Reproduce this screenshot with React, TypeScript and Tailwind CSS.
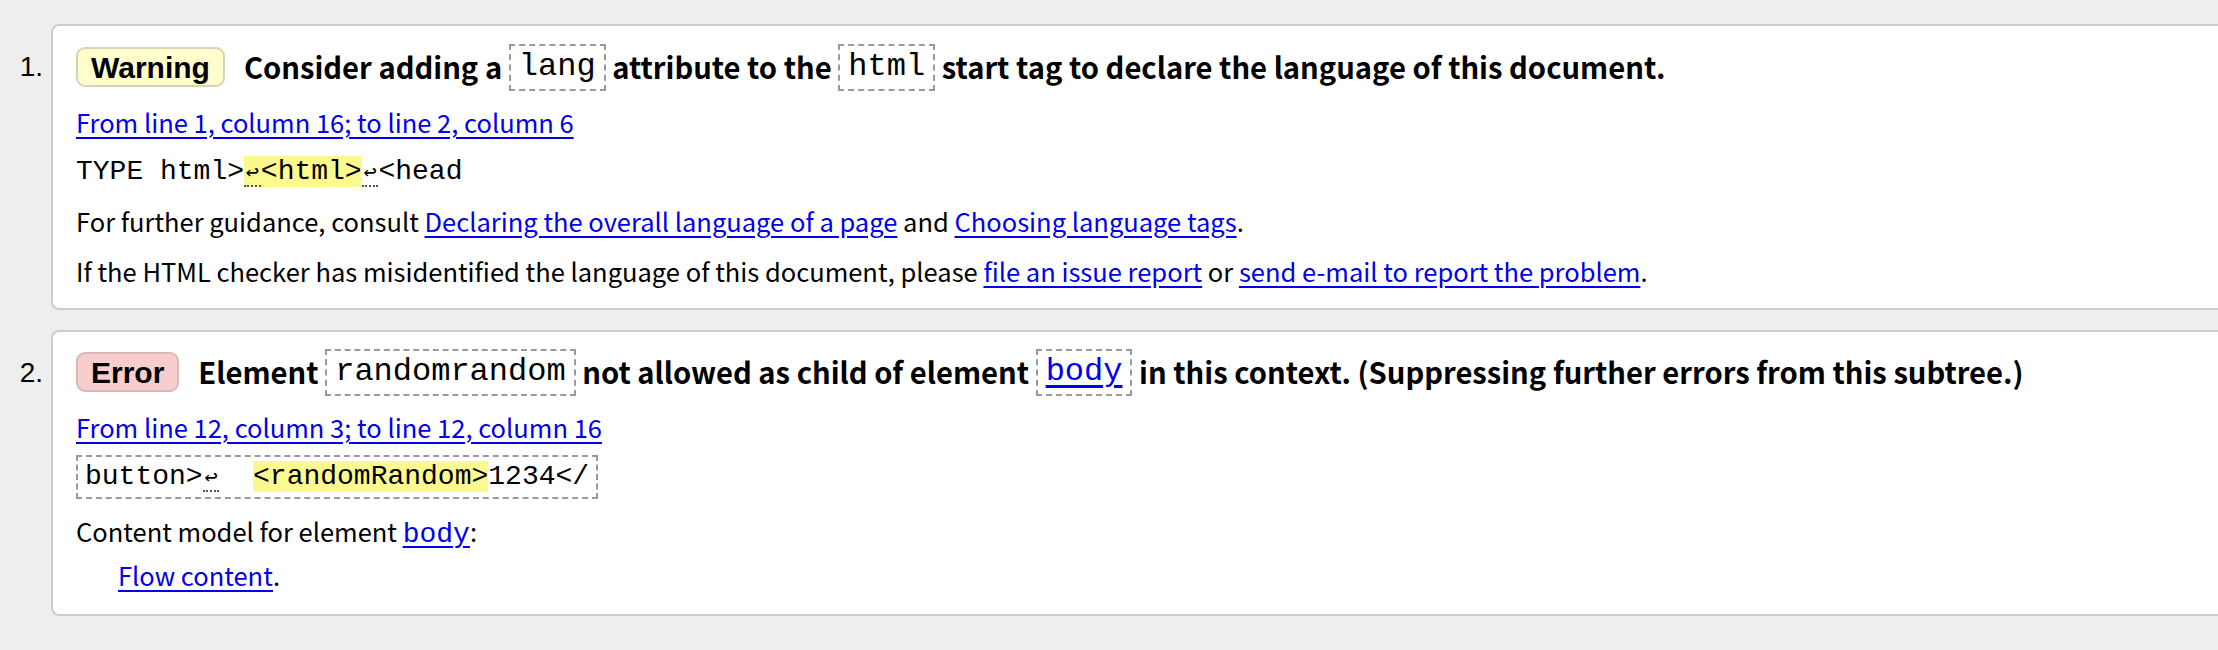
import React from 'react';

const sans = "font-['Noto_Sans_CJK_KR','Noto_Sans',sans-serif]";
const arial = "font-['Liberation_Sans',Arial,sans-serif]";
const mono = "font-['Liberation_Mono','DejaVu_Sans_Mono',monospace]";

function Code({ children, link }: { children: React.ReactNode; link?: boolean }) {
  return (
    <span className={`${mono} inline-flex h-[47px] items-center border-2 border-dashed border-[#9a9a9a] px-2 text-[32px] font-normal leading-none`}>
      {link ? <a href="#" className="text-[#0000ee] underline underline-offset-[5px]">{children}</a> : children}
    </span>
  );
}

// line feed marker, dotted underline like the checker's source view
function Lf() {
  return <span className="inline-block w-[16.8px] border-b-2 border-dotted border-[#555] text-center text-[22px] leading-[22px]">↩</span>;
}

function Badge({ kind }: { kind: 'warning' | 'error' }) {
  const warn = kind === 'warning';
  return (
    <span className={`${arial} mr-[19px] inline-flex h-[40px] items-center rounded-[9px] border-2 px-[13px] text-[30px] font-bold ${
      warn ? 'border-[#d4d4b8] bg-[#ffffcc]' : 'border-[#d9b8b8] bg-[#f8cdcd]'
    }`}>{warn ? 'Warning' : 'Error'}</span>
  );
}

function Item({ n, children }: { n: number; children: React.ReactNode }) {
  return (
    <div className="flex">
      <div className={`${arial} w-[51px] shrink-0 pr-[8px] pt-[19px] text-right text-[28px] leading-[48px]`}>{n}.</div>
      <div className="-mr-[20px] flex-1 rounded-[8px] border-2 border-[#cccccc] bg-white pl-[23px]">
        {children}
      </div>
    </div>
  );
}

const link = 'text-[#0000ee] underline underline-offset-[4px]';

export default function App() {
  return (
    <div className={`min-h-[650px] w-full overflow-hidden bg-[#eeeeee] pt-[24px] text-black ${sans}`}>
      <div className="flex flex-col gap-[20px]">
        <Item n={1}>
          <div className="pt-[17px] pb-[20px]">
            <div className="flex h-[48px] items-center whitespace-pre text-[29.2px] font-bold">
              <Badge kind="warning" />
              <span>Consider adding a </span>
              <Code>lang</Code>
              <span> attribute to the </span>
              <Code>html</Code>
              <span> start tag to declare the language of this document.</span>
            </div>
            <div className="mt-[14px] h-[34px] text-[25.5px] leading-[34px]">
              <a href="#" className={link}>From line 1, column 16; to line 2, column 6</a>
            </div>
            <div className={`mt-[16px] h-[34px] whitespace-pre text-[28px] leading-[34px] ${mono}`}>
              TYPE html&gt;<span className="bg-[#fcfa8e]"><Lf />&lt;html&gt;</span><Lf />&lt;head
            </div>
            <div className="mt-[15px] h-[34px] text-[25.5px] leading-[34px]">
              For further guidance, consult <a href="#" className={link}>Declaring the overall language of a page</a> and <a href="#" className={link}>Choosing language tags</a>.
            </div>
            <div className="mt-[16px] h-[34px] text-[25.5px] leading-[34px]">
              If the HTML checker has misidentified the language of this document, please <a href="#" className={link}>file an issue report</a> or <a href="#" className={link}>send e-mail to report the problem</a>.
            </div>
          </div>
        </Item>

        <Item n={2}>
          <div className="pt-[16px] pb-[22px]">
            <div className="flex h-[48px] items-center whitespace-pre text-[29.2px] font-bold">
              <Badge kind="error" />
              <span>Element </span>
              <Code>randomrandom</Code>
              <span> not allowed as child of element </span>
              <Code link>body</Code>
              <span> in this context. (Suppressing further errors from this subtree.)</span>
            </div>
            <div className="mt-[14px] h-[34px] text-[25.5px] leading-[34px]">
              <a href="#" className={link}>From line 12, column 3; to line 12, column 16</a>
            </div>
            <div className="mt-[11px]">
              <div className={`inline-block h-[44px] whitespace-pre border-2 border-dashed border-[#9a9a9a] px-[7px] text-[28px] leading-[40px] ${mono}`}>
                button&gt;<Lf />{'  '}<span className="bg-[#fcfa8e]">&lt;randomRandom&gt;</span>1234&lt;/
              </div>
            </div>
            <div className="mt-[15px] h-[34px] text-[25.5px] leading-[34px]">
              Content model for element <a href="#" className={`${mono} text-[28px] ${link}`}>body</a>:
            </div>
            <div className="mt-[10px] h-[34px] pl-[42px] text-[25.5px] leading-[34px]">
              <a href="#" className={link}>Flow content</a>.
            </div>
          </div>
        </Item>
      </div>
    </div>
  );
}
